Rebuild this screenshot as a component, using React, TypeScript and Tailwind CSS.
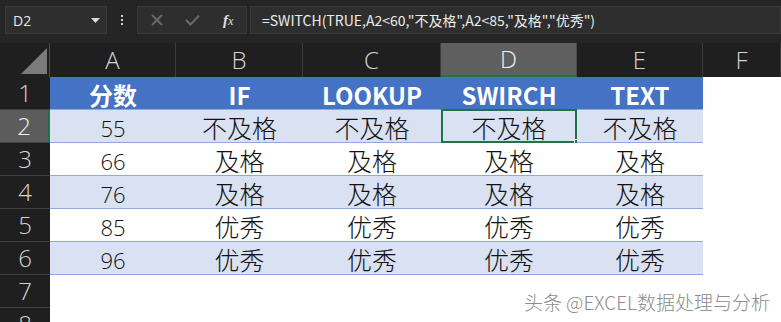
import React from "react";

const cjk = { fontFamily: '"Noto Sans CJK SC", "Noto Sans", sans-serif' };
const cjkLight = { fontFamily: '"Noto Sans CJK SC", "Noto Sans", sans-serif', fontWeight: 300 };
const ui = { fontFamily: '"Open Sans", "Noto Sans", sans-serif' };
const num = { fontFamily: '"Open Sans", "Noto Sans", sans-serif', fontWeight: 300 };

const rows: { n: string; v: string[] }[] = [
  { n: "55", v: ["不及格", "不及格", "不及格", "不及格"] },
  { n: "66", v: ["及格", "及格", "及格", "及格"] },
  { n: "76", v: ["及格", "及格", "及格", "及格"] },
  { n: "85", v: ["优秀", "优秀", "优秀", "优秀"] },
  { n: "96", v: ["优秀", "优秀", "优秀", "优秀"] },
];

const cols = ["A", "B", "C", "D", "E", "F"];

export default function App() {
  return (
    <div className="relative w-[781px] h-[322px] overflow-hidden bg-white">
      {/* formula bar */}
      <div className="flex items-start h-[43px] bg-[#252525] pt-[6px] pl-[5px]">
        <div
          className="flex items-center justify-between w-[102px] h-[28px] bg-[#2e2e2e] border border-[#3a3a3a] pl-[7px] pr-[6px]"
          style={ui}
        >
          <span className="text-[14px] text-[#e6e6e6]">D2</span>
          <svg width="9" height="5" viewBox="0 0 9 5">
            <path d="M0 0 L9 0 L4.5 5 Z" fill="#dcdcdc" />
          </svg>
        </div>
        <div className="flex flex-col items-center justify-center gap-[2px] w-[30px] h-[28px]">
          <span className="block w-[2px] h-[2px] bg-[#d0d0d0]" />
          <span className="block w-[2px] h-[2px] bg-[#d0d0d0]" />
          <span className="block w-[2px] h-[2px] bg-[#d0d0d0]" />
        </div>
        <div className="flex items-center w-[110px] h-[28px] bg-[#2e2e2e] border border-[#3a3a3a]">
          <svg width="12" height="12" viewBox="0 0 12 12" className="ml-[13px]">
            <path d="M1 1 L11 11 M11 1 L1 11" stroke="#6a6a6a" strokeWidth="1.8" />
          </svg>
          <svg width="15" height="12" viewBox="0 0 15 12" className="ml-[22px]">
            <path d="M1 6 L5.5 10.5 L14 1.5" stroke="#6a6a6a" strokeWidth="2" fill="none" />
          </svg>
          <span
            className="ml-[23px] text-[15px] italic text-[#e0e0e0]"
            style={{ fontFamily: '"Liberation Serif", serif' }}
          >
            <span className="font-bold">f</span>
            <span className="text-[12px]">x</span>
          </span>
        </div>
        <div
          className="flex items-center flex-1 h-[28px] ml-[3px] bg-[#2e2e2e] border border-[#3a3a3a] pl-[11px] text-[14px] text-[#ececec] whitespace-nowrap"
          style={cjk}
        >
          =SWITCH(TRUE,A2&lt;60,"不及格",A2&lt;85,"及格","优秀")
        </div>
      </div>

      {/* grid */}
      <div className="grid grid-cols-[50px_126px_127px_138px_136px_126px_1fr]">
        {/* column headers */}
        <div className="relative h-[34px] bg-[#1f1f1f] border-r border-[#4a4a4a]">
          <svg width="26" height="26" viewBox="0 0 26 26" className="absolute left-[21px] top-[5px]">
            <path d="M0 26 L26 26 L26 0 Z" fill="#7b7b7b" />
          </svg>
        </div>
        {cols.map((c) => (
          <div
            key={c}
            className={
              c === "D"
                ? "flex items-center justify-center h-[34px] bg-[#5f5f5f] border-r border-[#4a4a4a] border-b-2 border-b-[#217346] text-[24px] font-light text-[#f0f0f0]"
                : "flex items-center justify-center h-[34px] bg-[#1f1f1f] border-r border-[#3c3c3c] text-[24px] font-light text-[#d4d4d4]"
            }
            style={ui}
          >
            {c}
          </div>
        ))}

        {/* row 1 */}
        <div
          className="flex items-center justify-center h-[33px] bg-[#1f1f1f] border-b border-[#3f3f3f] text-[24px] font-light text-[#d4d4d4]"
          style={ui}
        >
          1
        </div>
        {["分数", "IF", "LOOKUP", "SWIRCH", "TEXT"].map((h) => (
          <div
            key={h}
            className="flex items-center justify-center pt-[4px] h-[33px] bg-[#4472c4] border-b border-[#8eaadb] text-[24px] font-bold text-white"
            style={cjk}
          >
            {h}
          </div>
        ))}
        <div className="h-[33px] bg-white" />

        {rows.map((r, i) => {
          const band = i % 2 === 0;
          const bg = band ? "bg-[#d9e1f2]" : "bg-white";
          const rowNo = String(i + 2);
          const sel = i === 0;
          return (
            <React.Fragment key={rowNo}>
              <div
                className={
                  sel
                    ? "flex items-center justify-center h-[33px] bg-[#5c5c5c] border-b border-[#3f3f3f] border-r-2 border-r-[#217346] text-[24px] font-light text-[#f2f2f2]"
                    : "flex items-center justify-center h-[33px] bg-[#1f1f1f] border-b border-[#3f3f3f] text-[24px] font-light text-[#d4d4d4]"
                }
                style={ui}
              >
                {rowNo}
              </div>
              <div
                className={`flex items-center justify-center pt-[5px] h-[33px] ${bg} border-b border-[#8eaadb] text-[22px] text-[#111]`}
                style={num}
              >
                {r.n}
              </div>
              {r.v.map((v, j) => (
                <div
                  key={j}
                  className={`relative flex items-center justify-center pt-[4px] h-[33px] ${bg} border-b border-[#8eaadb] text-[25px] text-[#111]`}
                  style={cjkLight}
                >
                  {v}
                  {sel && j === 2 && (
                    <>
                      <div className="absolute left-0 right-0 top-[-1px] bottom-[-1px] border-2 border-[#217346]" />
                      <div className="absolute right-[-4px] bottom-[-4px] w-[7px] h-[7px] bg-[#217346] border border-white" />
                    </>
                  )}
                </div>
              ))}
              <div className="h-[33px] bg-white" />
            </React.Fragment>
          );
        })}

        {["7", "8"].map((n) => (
          <React.Fragment key={n}>
            <div
              className="flex items-center justify-center h-[33px] bg-[#1f1f1f] border-b border-[#3f3f3f] text-[24px] font-light text-[#d4d4d4]"
              style={ui}
            >
              {n}
            </div>
            <div className="col-span-6 h-[33px] bg-white" />
          </React.Fragment>
        ))}
      </div>

      {/* watermark */}
      <div
        className="absolute right-[11px] top-[288px] text-[19px] text-[#8c8c8c] whitespace-nowrap"
        style={{
          ...cjkLight,
          textShadow:
            "1px 0 0 #fff, -1px 0 0 #fff, 0 1px 0 #fff, 0 -1px 0 #fff",
        }}
      >
        头条 @EXCEL数据处理与分析
      </div>
    </div>
  );
}
